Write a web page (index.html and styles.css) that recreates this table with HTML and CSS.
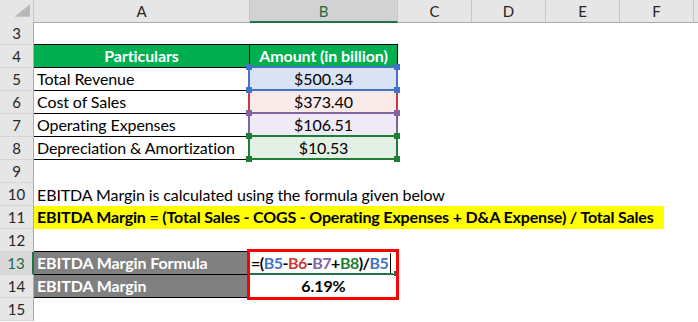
FILE: index.html
```html
<!DOCTYPE html>
<html>
<head>
<meta charset="utf-8">
<link rel="stylesheet" href="styles.css">
</head>
<body>
<div class="sheet">
  <div class="row hdr">
    <div class="corner"><svg width="34" height="22" viewBox="0 0 34 22"><polygon points="15,17 31,17 31,4" fill="#b9b9b9"/></svg></div>
    <div class="colh">A</div>
    <div class="colh sel">B</div>
    <div class="colh">C</div>
    <div class="colh">D</div>
    <div class="colh">E</div>
    <div class="colh">F</div>
    <div class="colh last"></div>
  </div>

  <div class="row">
    <div class="rh">3</div>
    <div class="c tb"></div><div class="c tb"></div><div class="c"></div><div class="c"></div><div class="c"></div><div class="c"></div><div class="c"></div>
  </div>

  <div class="row">
    <div class="rh">4</div>
    <div class="c t th">Particulars</div>
    <div class="c t th">Amount (in billion)</div>
    <div class="c"></div><div class="c"></div><div class="c"></div><div class="c"></div><div class="c"></div>
  </div>

  <div class="row">
    <div class="rh">5</div>
    <div class="c t">Total Revenue</div>
    <div class="c t num fill-blue">$500.34<span class="ref ref-blue"><i class="h tl"></i><i class="h tr"></i><i class="h bl"></i><i class="h br"></i></span></div>
    <div class="c"></div><div class="c"></div><div class="c"></div><div class="c"></div><div class="c"></div>
  </div>

  <div class="row">
    <div class="rh">6</div>
    <div class="c t">Cost of Sales</div>
    <div class="c t num fill-red">$373.40<span class="ref ref-red"></span></div>
    <div class="c"></div><div class="c"></div><div class="c"></div><div class="c"></div><div class="c"></div>
  </div>

  <div class="row">
    <div class="rh">7</div>
    <div class="c t">Operating Expenses</div>
    <div class="c t num fill-purple">$106.51<span class="ref ref-purple"><i class="h tl"></i><i class="h tr"></i><i class="h bl"></i><i class="h br"></i></span></div>
    <div class="c"></div><div class="c"></div><div class="c"></div><div class="c"></div><div class="c"></div>
  </div>

  <div class="row">
    <div class="rh">8</div>
    <div class="c t">Depreciation &amp; Amortization</div>
    <div class="c t num fill-green">$10.53<span class="ref ref-green"><i class="h tl"></i><i class="h tr"></i><i class="h bl"></i><i class="h br"></i></span></div>
    <div class="c"></div><div class="c"></div><div class="c"></div><div class="c"></div><div class="c"></div>
  </div>

  <div class="row">
    <div class="rh">9</div>
    <div class="c"></div><div class="c"></div><div class="c"></div><div class="c"></div><div class="c"></div><div class="c"></div><div class="c"></div>
  </div>

  <div class="row">
    <div class="rh">10</div>
    <div class="c wide">EBITDA Margin is calculated using the formula given below</div>
  </div>

  <div class="row">
    <div class="rh">11</div>
    <div class="c wide nopad"><div class="hl">EBITDA Margin = (Total Sales - COGS - Operating Expenses + D&amp;A Expense) / Total Sales</div></div>
  </div>

  <div class="row">
    <div class="rh">12</div>
    <div class="c"></div><div class="c"></div><div class="c"></div><div class="c"></div><div class="c"></div><div class="c"></div><div class="c"></div>
  </div>

  <div class="row">
    <div class="rh active">13</div>
    <div class="c t gray tt">EBITDA Margin Formula</div>
    <div class="c t tt formula"><span class="k">=(</span><span class="fb">B5</span><span class="k">-</span><span class="fr">B6</span><span class="k">-</span><span class="fp">B7</span><span class="k">+</span><span class="fg">B8</span><span class="k">)/</span><span class="fb">B5</span><span class="caret"></span><span class="activeline"></span><span class="fillh"></span><span class="redbox"></span></div>
    <div class="c"></div><div class="c"></div><div class="c"></div><div class="c"></div><div class="c"></div>
  </div>

  <div class="row">
    <div class="rh">14</div>
    <div class="c t gray">EBITDA Margin</div>
    <div class="c t num bold">6.19%</div>
    <div class="c"></div><div class="c"></div><div class="c"></div><div class="c"></div><div class="c"></div>
  </div>

  <div class="row">
    <div class="rh">15</div>
    <div class="c"></div><div class="c"></div><div class="c"></div><div class="c"></div><div class="c"></div><div class="c"></div><div class="c"></div>
  </div>
</div>
</body>
</html>
```
FILE: styles.css
```css
* { box-sizing: border-box; margin: 0; padding: 0; }
html, body { background: #fff; }
body {
  margin: 0;
  overflow: hidden;
  font-family: Lato, "Liberation Sans", sans-serif;
  font-size: 16px;
  color: #000;
}
.sheet { width: 698px; }
.row {
  display: grid;
  grid-template-columns: 34px 216px 148px 74px 74px 74px 74px 1fr;
  height: 23px;
}
.row.hdr { height: 22px; }

.corner {
  background: #e6e6e6;
  border-right: 1px solid #c8c8c8;
  border-bottom: 1px solid #ababab;
  display: flex;
}
.colh {
  background: #e6e6e6;
  border-right: 1px solid #c6c6c6;
  border-bottom: 1px solid #ababab;
  display: flex;
  align-items: center;
  justify-content: center;
  font-size: 15px;
  color: #262626;
}
.colh.sel {
  background: #d2d2d2;
  color: #1d6b3f;
  border-bottom: 2px solid #217346;
}
.colh.last { border-right: none; }

.rh {
  background: #e6e6e6;
  border-right: 1px solid #ababab;
  border-bottom: 1px solid #d5d5d5;
  display: flex;
  align-items: center;
  justify-content: center;
  font-size: 15px;
  color: #262626;
}
.rh.active {
  background: #d9d9d9;
  color: #1d6b3f;
  border-right: 2px solid #217346;
}

.c {
  position: relative;
  display: flex;
  align-items: center;
  padding: 0 3px;
  white-space: nowrap;
  line-height: 22px;
  letter-spacing: -0.1px;
}
.c.wide { grid-column: 2 / -1; }
.c.nopad { padding: 0; }
.tb { border-bottom: 1px solid #000; }
.t {
  border-right: 1px solid #000;
  border-bottom: 1px solid #000;
}
.th {
  background: #00b050;
  color: #fff;
  font-weight: 700;
  justify-content: center;
}
.num { justify-content: center; }
.bold { font-weight: 700; }
.gray {
  background: #808080;
  color: #fff;
  font-weight: 700;
}
.tt { border-top: 1px solid #000; margin-top: -1px; }

.fill-blue { background: #dae3f3; }
.fill-red { background: #fbeaea; }
.fill-purple { background: #eeeaf6; }
.fill-green { background: #e3f0e5; }

.ref {
  position: absolute;
  left: -2px;
  top: -2px;
  right: -1px;
  bottom: -1px;
  border: 2px solid;
  pointer-events: none;
}
.ref-blue { border-color: #4472c4; z-index: 4; }
.ref-red { border-color: #c9393d; z-index: 2; }
.ref-purple { border-color: #8064a2; z-index: 3; }
.ref-green { border-color: #1f7d35; z-index: 3; }
.ref-red { border-top-color: transparent; border-bottom-color: transparent; }
.h {
  position: absolute;
  width: 6px;
  height: 6px;
}
.ref-blue .h { background: #4472c4; }
.ref-purple .h { background: #8064a2; }
.ref-green .h { background: #1f7d35; }
.h.tl { left: -4px; top: -4px; }
.h.tr { right: -4px; top: -4px; }
.h.bl { left: -4px; bottom: -4px; }
.h.br { right: -4px; bottom: -4px; }

.hl {
  width: 630px;
  height: 23px;
  background: #ffff00;
  font-weight: 700;
  padding-left: 3px;
  line-height: 22px;
  letter-spacing: -0.16px;
}

.formula { font-weight: 700; padding-left: 1px; letter-spacing: -0.5px; }
.k { color: #000; }
.fb { color: #4472c4; }
.fr { color: #c9393d; }
.fp { color: #8064a2; }
.fg { color: #1f7d35; }
.caret {
  display: inline-block;
  width: 1px;
  height: 20px;
  background: #000;
  margin-left: 2px;
}
.activeline {
  position: absolute;
  left: 0;
  right: 4px;
  bottom: -1px;
  height: 2px;
  background: #217346;
}
.fillh {
  position: absolute;
  right: -2px;
  bottom: -2px;
  width: 5px;
  height: 5px;
  background: #217346;
}
.redbox {
  position: absolute;
  left: -3px;
  top: -3px;
  width: 152px;
  height: 51px;
  border: 3px solid #ff0000;
  z-index: 5;
}
```
